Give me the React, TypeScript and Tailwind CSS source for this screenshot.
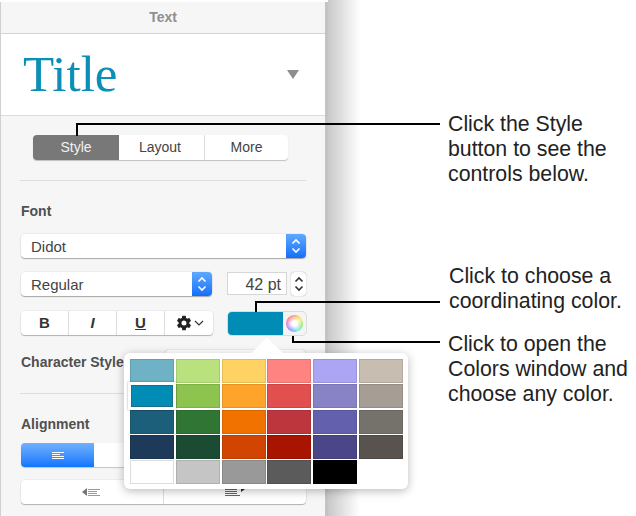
import { IoSettingsSharp } from "react-icons/io5";

const swatches = [
  ["#6fb2c6", "#b9e27e", "#fed263", "#fe8381", "#aba5f3", "#c7bdb1"],
  ["#008cb4", "#8dc44f", "#fea42a", "#e14f4f", "#8883c4", "#a69d94"],
  ["#1c5f7a", "#317534", "#f27200", "#bd363e", "#6361ae", "#75716b"],
  ["#1e3a5a", "#1b4b33", "#d24402", "#a91400", "#4b4687", "#58534e"],
  ["#ffffff", "#c5c5c5", "#999999", "#5b5b5b", "#000000", ""],
];

// up/down arrows used on the popup buttons and the stepper
function Updown({ color }: { color: string }) {
  return (
    <svg width="10" height="16" viewBox="0 0 10 16" fill="none" stroke={color} strokeWidth="1.6">
      <path d="M1.5 5.5 5 2l3.500 3.500M1.500 10.500 5 14l3.500-3.500" />
    </svg>
  );
}

function Popup({ label, className }: { label: string; className: string }) {
  return (
    <div className={`flex h-[24px] rounded-[4px] bg-white shadow-[0_1px_1px_rgba(0,0,0,0.3),0_0_0_0.5px_rgba(0,0,0,0.08)] ${className}`}>
      <div className="flex-1 pl-[10px] text-[15px] leading-[25px] text-[#444]">{label}</div>
      <div className="flex w-[20px] items-center justify-center rounded-r-[4px] bg-gradient-to-b from-[#5fa8fc] to-[#0d6ffb]">
        <Updown color="#ffffff" />
      </div>
    </div>
  );
}

function Lines({ widths, color }: { widths: number[]; color: string }) {
  return (
    <div className="flex flex-col gap-[1px]">
      {widths.map((w, i) => (
        <div key={i} className="h-[1px]" style={{ width: w, backgroundColor: color }} />
      ))}
    </div>
  );
}

function Callout({ lines, className }: { lines: string[]; className: string }) {
  return (
    <div className={`absolute text-[21.3px] leading-[25px] text-[#222] ${className}`}>
      {lines.map((l) => (
        <div key={l} className="whitespace-nowrap">{l}</div>
      ))}
    </div>
  );
}

export default function App() {
  return (
    <div className="relative flex h-[516px] w-[636px] overflow-hidden bg-white font-['Liberation_Sans',sans-serif]">
      {/* Inspector panel */}
      <div className="mt-[2px] flex h-[514px] w-[328px] flex-col border-l border-l-[#d0d0d0] border-r-[3px] border-r-[#c4c4c4] bg-[#f6f6f6]">
        <div className="h-[31px] text-center text-[14px] font-bold leading-[30px] text-[#8e8e8e]">Text</div>
        <div className="flex h-[83px] items-center justify-between border-y border-y-[#d2d4d8] border-b-[#dcdcdc] bg-white pl-[22px] pr-[26px]">
          <div className="font-['Liberation_Serif',serif] text-[51px] leading-[72px] mb-[2px] text-[#0b8fb6]">Title</div>
          <div className="h-0 w-0 border-x-[6.500px] border-t-[9px] border-x-transparent border-t-[#8e8e8e]" />
        </div>

        <div className="ml-[32px] mt-[19px] flex h-[25px] w-[255px] rounded-[4px] bg-white text-[14px] leading-[25px] shadow-[0_1px_1px_rgba(0,0,0,0.22)]">
          <div className="w-[86px] rounded-l-[4px] bg-[#787878] text-center text-[#f2f2f2]">Style</div>
          <div className="w-[86px] border-r border-r-[#dedede] pr-[3px] text-center text-[#444]">Layout</div>
          <div className="flex-1 text-center text-[#444]">More</div>
        </div>
        <div className="ml-[19px] mt-[20px] h-[1px] w-[286px] bg-[#dedede]" />

        <div className="ml-[20px] mt-[22px] text-[14px] font-bold leading-[16px] text-[#505050]">Font</div>
        <Popup label="Didot" className="ml-[20px] mt-[15px] w-[285px]" />

        <div className="ml-[20px] mt-[14px] flex items-start">
          <Popup label="Regular" className="w-[191px]" />
          <div className="ml-[15px] h-[23px] w-[60px] border border-[#d6d6d6] bg-white pr-[5px] text-right text-[16px] leading-[23px] text-[#444]">42 pt</div>
          <div className="ml-[4px] flex h-[24px] w-[15px] items-center justify-center rounded-[4px] bg-white shadow-[0_0_1px_rgba(0,0,0,0.5)]">
            <Updown color="#333333" />
          </div>
        </div>

        <div className="ml-[20px] mt-[15px] flex items-start">
          <div className="flex h-[24px] w-[192px] items-center rounded-[4px] bg-white text-[15px] text-[#333] shadow-[0_1px_1px_rgba(0,0,0,0.25),0_0_0_0.5px_rgba(0,0,0,0.08)]">
            <div className="h-full w-[48px] border-r border-r-[#dedede] text-center font-bold leading-[24px]">B</div>
            <div className="h-full w-[48px] border-r border-r-[#dedede] text-center font-bold italic leading-[24px]">I</div>
            <div className="h-full w-[48px] border-r border-r-[#dedede] text-center font-bold leading-[24px] underline">U</div>
            <div className="flex flex-1 items-center justify-center gap-[2px] pl-[1px]">
              <IoSettingsSharp className="h-[16px] w-[16px] text-[#222]" />
              <svg width="10" height="6" viewBox="0 0 10 6" fill="none" stroke="#333" strokeWidth="1.200">
                <path d="M1 1l4 4 4-4" />
              </svg>
            </div>
          </div>
          <div className="ml-[14px] flex h-[25px] w-[80px] rounded-[5px] border border-[#dcdcdc] bg-[#f4f4f4]">
            <div className="w-[55px] rounded-l-[4px] bg-[#008cb4]" />
            <div className="flex flex-1 items-center justify-center">
              <div className="h-[17px] w-[17px] rounded-full bg-[radial-gradient(circle,#ffffff_20%,rgba(255,255,255,0)_75%),conic-gradient(#ff9a4a,#f2ea4a,#7fe86a,#5fe8e0,#5f8dff,#d86fe8,#ff6a7a,#ff9a4a)]" />
            </div>
          </div>
        </div>

        <div className="ml-[20px] mt-[14px] flex h-[24px] items-center">
          <div className="w-[144px] whitespace-nowrap text-[14px] font-bold leading-[16px] text-[#505050]">Character Styles</div>
          <div className="h-[24px] w-[141px] rounded-[4px] bg-white shadow-[0_0_1px_rgba(0,0,0,0.4)]" />
        </div>
        <div className="ml-[19px] mt-[19px] h-[1px] w-[286px] bg-[#dedede]" />

        <div className="ml-[20px] mt-[22px] text-[14px] font-bold leading-[16px] text-[#505050]">Alignment</div>
        <div className="ml-[20px] mt-[11px] flex h-[24px] w-[285px] rounded-[4px] bg-white shadow-[0_1px_1px_rgba(0,0,0,0.2)]">
          <div className="flex w-[73px] items-center justify-center rounded-l-[4px] bg-gradient-to-b from-[#6fb1fd] to-[#0c75fb]">
            <Lines widths={[12, 8, 12, 12]} color="#ffffff" />
          </div>
        </div>
        <div className="ml-[20px] mt-[13px] flex h-[24px] w-[285px] rounded-[4px] bg-white shadow-[0_1px_1px_rgba(0,0,0,0.25),0_0_0_0.5px_rgba(0,0,0,0.08)]">
          <div className="flex w-[143px] items-center justify-center gap-[1px] border-r border-r-[#dedede] pr-[2px]">
            <div className="h-0 w-0 border-y-[4px] border-r-[5px] border-y-transparent border-r-[#777]" />
            <Lines widths={[12, 9, 9, 12]} color="#999999" />
          </div>
          <div className="flex flex-1 items-center justify-center gap-[1px]">
            <Lines widths={[12, 12, 12, 15]} color="#666666" />
            <div className="mb-[6px] h-0 w-0 border-y-[3px] border-l-[4px] border-y-transparent border-l-[#222]" />
          </div>
        </div>
      </div>

      {/* Shadow the panel throws on the page */}
      <div className="h-[516px] w-[32px] bg-gradient-to-r from-[#c9c9c9] to-[#ffffff]" />

      {/* Colour popover */}
      <div className="absolute left-[124px] top-[353px] h-[136px] w-[284px] rounded-[6px] bg-white p-[6px] shadow-[0_2px_10px_rgba(0,0,0,0.28)]">
        <div className="absolute left-[132px] top-[-11px] h-[22px] w-[22px] rotate-45 bg-white" />
        <div className="relative grid grid-cols-[44px_44px_44px_44px_44px_44px] grid-rows-[24px_24px_24px_24px_24px] gap-x-[1.800px] gap-y-[1.300px]">
          {swatches.flat().map((c, i) =>
            c === "" ? (
              <div key={i} />
            ) : i === 6 ? (
              <div key={i} className="relative z-10 -m-[2px] p-[3px] bg-white shadow-[0_0_2px_rgba(0,0,0,0.35)]">
                <div className="h-full w-full border border-[#1c6f8a]" style={{ backgroundColor: c }} />
              </div>
            ) : (
              <div key={i} className="border border-black/10" style={{ backgroundColor: c, borderColor: c === "#ffffff" ? "#dddddd" : undefined }} />
            ),
          )}
        </div>
      </div>

      {/* Callout lines */}
      <div className="absolute left-[76px] top-[123px] h-[13px] w-[364px] border-l-2 border-t-2 border-black" />
      <div className="absolute left-[255px] top-[301px] h-[11px] w-[185px] border-l-2 border-t-2 border-black" />
      <div className="absolute left-[292px] top-[336px] h-[7px] w-[148px] border-b-2 border-l-2 border-black" />

      <Callout lines={["Click the Style", "button to see the", "controls below."]} className="left-[448px] top-[112px]" />
      <Callout lines={["Click to choose a", "coordinating color."]} className="left-[449px] top-[264px]" />
      <Callout lines={["Click to open the", "Colors window and", "choose any color."]} className="left-[448px] top-[332px]" />
    </div>
  );
}
